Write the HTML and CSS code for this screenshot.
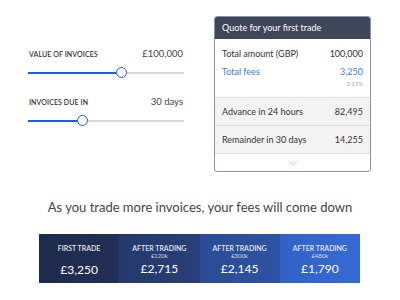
FILE: index.html
```html
<!DOCTYPE html>
<html lang="en">
<head>
    <meta charset="UTF-8">
    <title>Invoice Quote</title>
    <link rel="stylesheet" href="styles.css">
</head>
<body>
<div class="page">
    <div class="top">
        <div class="sliders">
            <div class="slider-group">
                <div class="slider-head">
                    <span class="slider-label">VALUE OF INVOICES</span>
                    <span class="slider-value">£100,000</span>
                </div>
                <div class="track">
                    <div class="fill" style="width: 60%"></div>
                    <div class="thumb"></div>
                </div>
            </div>
            <div class="slider-group">
                <div class="slider-head">
                    <span class="slider-label">INVOICES DUE IN</span>
                    <span class="slider-value">30 days</span>
                </div>
                <div class="track">
                    <div class="fill" style="width: 35%"></div>
                    <div class="thumb"></div>
                </div>
            </div>
        </div>

        <div class="quote">
            <div class="quote-header">Quote for your first trade</div>
            <div class="quote-body">
                <div class="row">
                    <span>Total amount (GBP)</span>
                    <span>100,000</span>
                </div>
                <div class="row fees">
                    <span>Total fees</span>
                    <span>3,250</span>
                </div>
                <div class="percent">3.25%</div>
            </div>
            <div class="quote-grey">
                <div class="row grey-row">
                    <span>Advance in 24 hours</span>
                    <span>82,495</span>
                </div>
                <div class="row grey-row">
                    <span>Remainder in 30 days</span>
                    <span>14,255</span>
                </div>
            </div>
            <div class="quote-foot">
                <svg width="10" height="6" viewBox="0 0 10 6"><path d="M1 1 L5 5 L9 1" fill="none" stroke="#c4c8d0" stroke-width="0.9"/></svg>
            </div>
        </div>
    </div>

    <p class="headline">As you trade more invoices, your fees will come down</p>

    <div class="tiers">
        <div class="tier tier-1">
            <div class="tier-title">FIRST TRADE</div>
            <div class="tier-price">£3,250</div>
        </div>
        <div class="tier tier-2">
            <div class="tier-title">AFTER TRADING</div>
            <div class="tier-sub">£120k</div>
            <div class="tier-price">£2,715</div>
        </div>
        <div class="tier tier-3">
            <div class="tier-title">AFTER TRADING</div>
            <div class="tier-sub">£300k</div>
            <div class="tier-price">£2,145</div>
        </div>
        <div class="tier tier-4">
            <div class="tier-title">AFTER TRADING</div>
            <div class="tier-sub">£480k</div>
            <div class="tier-price">£1,790</div>
        </div>
    </div>
</div>
</body>
</html>
```

FILE: styles.css
```css
body {
    margin: 0;
    background-color: #ffffff;
    font-family: 'Lato', 'Open Sans', sans-serif;
    color: #333;
}
.page {
    width: 400px;
    height: 300px;
    overflow: hidden;
}
.top {
    display: flex;
    justify-content: space-between;
    padding: 16px 29px 0 28px;
}
.sliders {
    width: 156px;
    padding-top: 32px;
}
.slider-group {
    margin-bottom: 22px;
}
.slider-head {
    display: flex;
    justify-content: space-between;
    align-items: baseline;
    padding: 0 1px;
}
.slider-label {
    font-size: 7px;
    font-weight: 600;
    color: #333;
    letter-spacing: 0.1px;
}
.slider-value {
    font-size: 9.5px;
    color: #444;
}
.track {
    position: relative;
    height: 2px;
    margin-top: 13px;
    background-color: #d9d9d9;
}
.fill {
    height: 2px;
    background-color: #1e5be6;
}
.thumb {
    position: absolute;
    top: -5px;
    width: 9px;
    height: 9px;
    margin-left: -6px;
    border: 1.5px solid #1e5be6;
    border-radius: 50%;
    background-color: #fff;
}
.slider-group:first-child .thumb {
    left: 60%;
}
.slider-group:last-child .thumb {
    left: 35%;
}
.quote {
    width: 155px;
    border: 1px solid #8c92a3;
    border-radius: 3px;
    overflow: hidden;
}
.quote-header {
    height: 22px;
    line-height: 21px;
    padding-left: 7px;
    background-color: #3e4659;
    color: #fff;
    font-size: 9px;
}
.quote-body {
    padding: 9px 7px 10px 7px;
}
.row {
    display: flex;
    justify-content: space-between;
    font-size: 9px;
    color: #333;
}
.fees {
    margin-top: 7px;
    color: #3a7be6;
}
.percent {
    text-align: right;
    font-size: 6px;
    color: #aaa;
    margin-top: 3px;
}
.quote-grey {
    background-color: #f3f3f3;
    border-top: 1px solid #e0e0e0;
}
.grey-row {
    height: 27px;
    align-items: center;
    padding: 0 7px;
    border-bottom: 1px solid #dedede;
}
.quote-foot {
    height: 17px;
    display: flex;
    justify-content: center;
    align-items: center;
}
.headline {
    margin: 27px 0 0 0;
    text-align: center;
    font-size: 13px;
    color: #444;
}
.tiers {
    display: flex;
    margin: 19px 0 0 39px;
    width: 321px;
    height: 49px;
}
.tier {
    flex: 1;
    display: flex;
    flex-direction: column;
    align-items: center;
    color: #fff;
    padding-top: 10px;
    box-sizing: border-box;
}
.tier-1 {
    background: linear-gradient(90deg, #1e2a4b, #222f55);
}
.tier-2 {
    background: linear-gradient(90deg, #24386a, #283f78);
}
.tier-3 {
    background: linear-gradient(90deg, #2a4b94, #2e53a4);
}
.tier-4 {
    background: linear-gradient(90deg, #3262c6, #3569d3);
}
.tier-title {
    font-size: 7px;
    font-weight: 600;
    color: #e4e7ee;
}
.tier-sub {
    font-size: 6px;
    color: #d8dce6;
}
.tier-price {
    font-size: 12px;
    margin-top: 2px;
}
.tier-1 .tier-price {
    margin-top: 10px;
}
```
